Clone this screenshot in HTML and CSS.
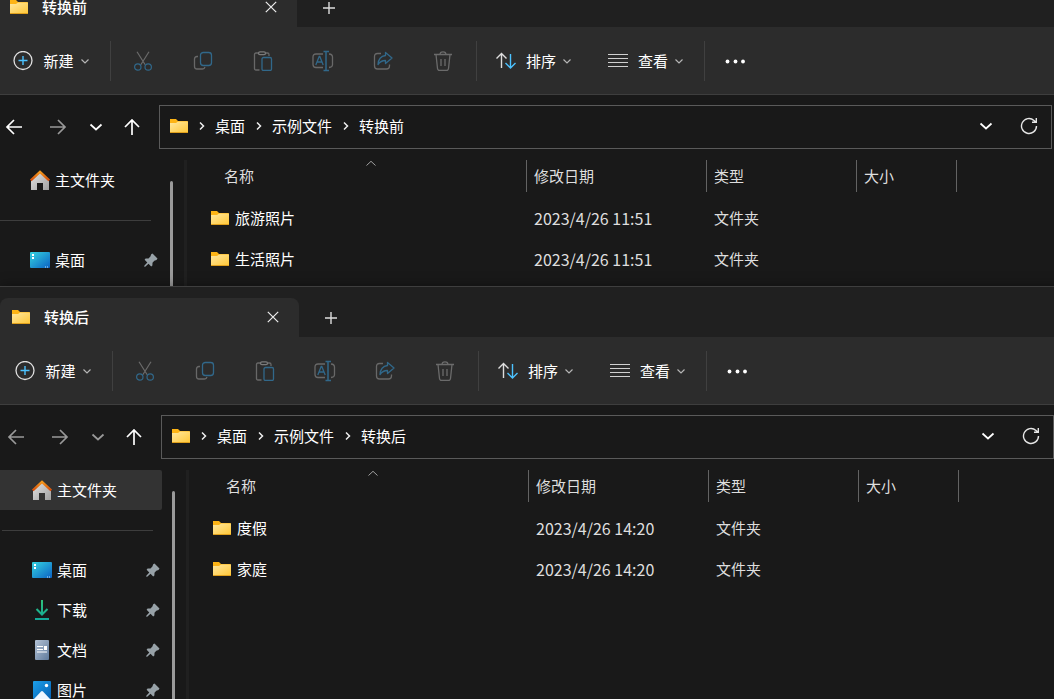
FILE: index.html
```html
<!DOCTYPE html>
<html lang="zh-CN">
<head>
<meta charset="utf-8">
<meta name="viewport" content="width=device-width, initial-scale=1">
<title>文件资源管理器</title>
<link rel="stylesheet" href="styles.css">
</head>
<body>
<svg class="sprite" aria-hidden="true">
  <defs>
    <linearGradient id="g-folder" x1="0" y1="0" x2="1" y2="1"><stop offset="0" stop-color="#ffe8a0"/><stop offset="1" stop-color="#ffc83a"/></linearGradient>
    <linearGradient id="g-roof" x1="0" y1="0" x2="0" y2="1"><stop offset="0" stop-color="#f59a1c"/><stop offset="1" stop-color="#d24a0a"/></linearGradient>
    <linearGradient id="g-wall" x1="0" y1="0" x2="1" y2="1"><stop offset="0" stop-color="#e4e4e4"/><stop offset="1" stop-color="#a0a0a0"/></linearGradient>
    <linearGradient id="g-desk" x1="0" y1="0" x2="1" y2="1"><stop offset="0" stop-color="#35d3e0"/><stop offset="1" stop-color="#0b62c4"/></linearGradient>
    <linearGradient id="g-down" x1="0" y1="0" x2="0" y2="20" gradientUnits="userSpaceOnUse"><stop offset="0" stop-color="#2fc27c"/><stop offset="1" stop-color="#12a89a"/></linearGradient>
    <linearGradient id="g-doc" x1="0" y1="0" x2="1" y2="1"><stop offset="0" stop-color="#b4c3d6"/><stop offset="1" stop-color="#5f7a9b"/></linearGradient>
    <linearGradient id="g-pic" x1="0" y1="0" x2="1" y2="1"><stop offset="0" stop-color="#1d9fe8"/><stop offset="1" stop-color="#0560b4"/></linearGradient>
  </defs>
  <symbol id="folder" viewBox="0 0 20 16"><path d="M1 1h6l2 2h9q1 0 1 1v10H1z" fill="#fdb415"/><path d="M1 5h6l2-1.500h10V14H1z" fill="url(#g-folder)"/><path d="M1 14.500h18" stroke="#e0a01c"/></symbol>
  <symbol id="close" viewBox="0 0 12 12"><path d="M.8.8l10.400 10.400M11.200.8L.8 11.200" stroke="#eee" stroke-width="1.200" fill="none"/></symbol>
  <symbol id="add" viewBox="0 0 14 14"><path d="M7 1v12M1 7h12" stroke="#ddd" stroke-width="1.400" fill="none"/></symbol>
  <symbol id="new" viewBox="0 0 20 20"><circle cx="10" cy="9.500" r="9" stroke="#e0e0e0" stroke-width="1.300" fill="none"/><path d="M10 5v9M5.500 9.500h9" stroke="#4cc2ff" stroke-width="1.400"/></symbol>
  <symbol id="chev" viewBox="0 0 10 10"><path d="M1.500 3.500L5 7l3.500-3.500" stroke="#b5b5b5" stroke-width="1.200" fill="none"/></symbol>
  <symbol id="cut" viewBox="0 0 20 20"><g fill="none" stroke-width="1.200"><path d="M4 .8l8.200 13M16 .8l-8.200 13" stroke="#6b6b6b"/><circle cx="4.800" cy="16" r="3.200" stroke="#31688a"/><circle cx="15.200" cy="16" r="3.200" stroke="#31688a"/></g></symbol>
  <symbol id="copy" viewBox="0 0 20 20"><g fill="none" stroke-width="1.300"><path d="M5 5.500H4Q1.500 5.500 1.500 8v7.500Q1.500 18 4 18h5.500q2 0 2.500-2" stroke="#686868"/><rect x="7.500" y="1.500" width="11" height="13" rx="2.800" stroke="#31688a"/></g></symbol>
  <symbol id="paste" viewBox="0 0 20 20"><g fill="none" stroke-width="1.300"><path d="M6.500 19H3q-1.500 0-1.500-1.500v-14Q1.500 2 3 2h2m8 0h1.500Q16 2 16 3.500V5" stroke="#686868"/><rect x="5.500" y=".8" width="7" height="2.800" rx="1.400" stroke="#7a7a7a"/><rect x="9" y="6.500" width="9.500" height="13" rx="1.500" stroke="#31688a"/></g></symbol>
  <symbol id="rename" viewBox="0 0 22 22"><g fill="none" stroke-width="1.300"><path d="M11 4H4Q1 4 1 7v7.500q0 3 3 3h7M17 4q3.500 .3 3.500 3v7.500q0 2.700-3.500 3" stroke="#686868"/><path d="M3.800 15l3.400-8.500h.6l3.400 8.500M5 12h5" stroke="#31688a"/><path d="M11.500 1.500h5.500M11.500 20.500h5.500M14 1.500v19" stroke="#31688a" stroke-width="1.500"/></g></symbol>
  <symbol id="share" viewBox="0 0 20 20"><g fill="none" stroke-width="1.300" stroke-linejoin="round"><path d="M8 2.500H4.500q-3 0-3 3V15q0 3 3 3h9q3 0 3-3v-1.500" stroke="#686868"/><path d="M12.500 1.500l6.500 5.500-6.500 5.500V9.500Q8 9.300 5 13.500 5.500 5.500 12.500 4.500z" stroke="#31688a"/></g></symbol>
  <symbol id="trash" viewBox="0 0 20 20"><path d="M1 3.500h18M3 3.500l1.500 14q.2 2 2 2h7q1.800 0 2-2l1.500-14M7 3.500q0-2.700 3-2.700t3 2.700M8 8v7M12 8v7" stroke="#6b6b6b" stroke-width="1.300" fill="none"/></symbol>
  <symbol id="sort" viewBox="0 0 20 20"><g fill="none" stroke-width="1.400"><path d="M5.500 17V2.500M.5 7.500l5-5 5 5" stroke="#ddd"/><path d="M14.500 3v14M9.500 12l5 5 5-5" stroke="#4cc2ff"/></g></symbol>
  <symbol id="view" viewBox="0 0 20 20"><path d="M0 3.500h20M0 7.500h20M0 11.500h20M0 15.500h20" stroke="#d0d0d0" stroke-width="1.200"/></symbol>
  <symbol id="more" viewBox="0 0 20 20"><g fill="#fff"><circle cx="2.500" cy="10.500" r="1.900"/><circle cx="10.500" cy="10.500" r="1.900"/><circle cx="18" cy="10.500" r="1.900"/></g></symbol>
  <symbol id="arrow" viewBox="0 0 18 18"><path d="M17 9H2M9 2L2 9l7 7" stroke="currentColor" stroke-width="1.700" fill="none"/></symbol>
  <symbol id="down" viewBox="0 0 14 14"><path d="M1.500 4.500L7 9.500l5.500-5" stroke="currentColor" stroke-width="1.700" fill="none"/></symbol>
  <symbol id="crumb" viewBox="0 0 10 10"><path d="M3 1.500L6.500 5 3 8.500" stroke="#eee" stroke-width="1.500" fill="none"/></symbol>
  <symbol id="refresh" viewBox="0 0 18 18"><path d="M16.500 9A7.500 7.500 0 1 1 14 3.400l2 1.800M16.300 1v4.300H12" stroke="#e6e6e6" stroke-width="1.400" fill="none"/></symbol>
  <symbol id="caret" viewBox="0 0 10 6"><path d="M.5 5.500L5 1.300 9.500 5.500" stroke="#a0a0a0" fill="none"/></symbol>
  <symbol id="home" viewBox="0 0 20 20"><path d="M1 10l9-8 9 8v10h-6v-7H7v7H1z" fill="url(#g-wall)"/><path d="M.8 10.500L10 1.800l9.200 8.700" fill="none" stroke="url(#g-roof)" stroke-width="2.400"/></symbol>
  <symbol id="desktop" viewBox="0 0 20 20"><rect y="2" width="20" height="16" rx="1" fill="url(#g-desk)"/><path d="M2 4h2v2H2zM2 7h2v2H2z" fill="#fff"/><path d="M15 17h1M17 17h1" stroke="#bde4ff"/></symbol>
  <symbol id="download" viewBox="0 0 20 20"><path d="M10 0v14M4.500 9L10 14.500 15.500 9M3 19h14" fill="none" stroke="url(#g-down)" stroke-width="2"/></symbol>
  <symbol id="document" viewBox="0 0 20 20"><rect x="3" width="14" height="20" rx="1" fill="url(#g-doc)"/><path d="M5 6.500h6M5 9.500h6M5 12h10" stroke="#fff"/><path d="M12 6h3v4h-3z" fill="#fff"/></symbol>
  <symbol id="picture" viewBox="0 0 20 20"><rect x="1" y="1" width="18" height="18" rx="1" fill="url(#g-pic)"/><circle cx="14.500" cy="5.500" r="1.700" fill="#fff"/><path d="M2 19l7-7.500q1-1 2 0l7 7.500z" fill="#eef6ff"/></symbol>
  <symbol id="pin" viewBox="0 0 14 14"><path d="M8.500.5l5 5-1 1.500-2.200.8-1.800 2-.1 2.700-1.200 1L4.500 10.800 1.200 13.700H.3v-.9l3-3.300L.6 6.800l1-1.200 2.900-.2L6.400 3.600 7.200 1.300z" fill="#98a2a8"/></symbol>
</svg>

<main class="desktop">
  <section class="window window-back" aria-label="转换前">
    <header class="tabs">
      <div class="tab">
        <svg class="i-folder"><use href="#folder"/></svg><span class="tab-title">转换前</span>
        <button class="tab-close" aria-label="关闭"><svg class="i12"><use href="#close"/></svg></button>
      </div>
      <button class="tab-add" aria-label="新标签页"><svg class="i14"><use href="#add"/></svg></button>
    </header>
    <div class="toolbar">
      <button class="command first"><svg class="i20"><use href="#new"/></svg><span>新建</span><svg class="i10"><use href="#chev"/></svg></button>
      <div class="tools">
        <button aria-label="剪切"><svg class="i20"><use href="#cut"/></svg></button>
        <button aria-label="复制"><svg class="i20"><use href="#copy"/></svg></button>
        <button aria-label="粘贴"><svg class="i20"><use href="#paste"/></svg></button>
        <button aria-label="重命名"><svg class="i22"><use href="#rename"/></svg></button>
        <button aria-label="共享"><svg class="i20"><use href="#share"/></svg></button>
        <button aria-label="删除"><svg class="i20"><use href="#trash"/></svg></button>
      </div>
      <div class="views">
        <button class="command"><svg class="i20"><use href="#sort"/></svg><span>排序</span><svg class="i10"><use href="#chev"/></svg></button>
        <button class="command"><svg class="i20"><use href="#view"/></svg><span>查看</span><svg class="i10"><use href="#chev"/></svg></button>
      </div>
      <button class="more" aria-label="更多"><svg class="i20"><use href="#more"/></svg></button>
    </div>
    <div class="location">
      <div class="history">
        <button aria-label="后退"><svg class="i18"><use href="#arrow"/></svg></button>
        <button class="dim" aria-label="前进"><svg class="i18 right"><use href="#arrow"/></svg></button>
        <button class="recent" aria-label="最近位置"><svg class="i14"><use href="#down"/></svg></button>
        <button class="up-button" aria-label="向上"><svg class="i18 up"><use href="#arrow"/></svg></button>
      </div>
      <nav class="address" aria-label="地址">
        <svg class="i-folder"><use href="#folder"/></svg>
        <svg class="crumb"><use href="#crumb"/></svg><a href="#">桌面</a>
        <svg class="crumb"><use href="#crumb"/></svg><a href="#">示例文件</a>
        <svg class="crumb"><use href="#crumb"/></svg><a href="#">转换前</a>
        <button class="history-list" aria-label="历史记录"><svg class="i14"><use href="#down"/></svg></button>
        <button aria-label="刷新"><svg class="i18"><use href="#refresh"/></svg></button>
      </nav>
    </div>
    <div class="body">
      <nav class="sidebar">
        <a class="place" href="#"><svg class="i20"><use href="#home"/></svg><span>主文件夹</span></a>
        <hr>
        <a class="place" href="#"><svg class="i20"><use href="#desktop"/></svg><span>桌面</span><svg class="pin"><use href="#pin"/></svg></a>
      </nav>
      <div class="scrollbar"></div>
      <div class="files">
        <svg class="sort-caret"><use href="#caret"/></svg>
        <table>
          <thead><tr><th class="c-name"><div>名称</div></th><th class="c-date"><div>修改日期</div></th><th class="c-type"><div>类型</div></th><th class="c-size"><div>大小</div></th><th></th></tr></thead>
          <tbody>
            <tr><td><div class="file"><svg class="i-folder"><use href="#folder"/></svg><span>旅游照片</span></div></td><td class="meta date">2023/4/26 11:51</td><td class="meta">文件夹</td><td></td><td></td></tr>
            <tr><td><div class="file"><svg class="i-folder"><use href="#folder"/></svg><span>生活照片</span></div></td><td class="meta date">2023/4/26 11:51</td><td class="meta">文件夹</td><td></td><td></td></tr>
          </tbody>
        </table>
      </div>
    </div>
  </section>

  <section class="window window-front" aria-label="转换后">
    <header class="tabs">
      <div class="tab">
        <svg class="i-folder"><use href="#folder"/></svg><span class="tab-title">转换后</span>
        <button class="tab-close" aria-label="关闭"><svg class="i12"><use href="#close"/></svg></button>
      </div>
      <button class="tab-add" aria-label="新标签页"><svg class="i14"><use href="#add"/></svg></button>
    </header>
    <div class="toolbar">
      <button class="command first"><svg class="i20"><use href="#new"/></svg><span>新建</span><svg class="i10"><use href="#chev"/></svg></button>
      <div class="tools">
        <button aria-label="剪切"><svg class="i20"><use href="#cut"/></svg></button>
        <button aria-label="复制"><svg class="i20"><use href="#copy"/></svg></button>
        <button aria-label="粘贴"><svg class="i20"><use href="#paste"/></svg></button>
        <button aria-label="重命名"><svg class="i22"><use href="#rename"/></svg></button>
        <button aria-label="共享"><svg class="i20"><use href="#share"/></svg></button>
        <button aria-label="删除"><svg class="i20"><use href="#trash"/></svg></button>
      </div>
      <div class="views">
        <button class="command"><svg class="i20"><use href="#sort"/></svg><span>排序</span><svg class="i10"><use href="#chev"/></svg></button>
        <button class="command"><svg class="i20"><use href="#view"/></svg><span>查看</span><svg class="i10"><use href="#chev"/></svg></button>
      </div>
      <button class="more" aria-label="更多"><svg class="i20"><use href="#more"/></svg></button>
    </div>
    <div class="location">
      <div class="history">
        <button class="dim" aria-label="后退"><svg class="i18"><use href="#arrow"/></svg></button>
        <button class="dim" aria-label="前进"><svg class="i18 right"><use href="#arrow"/></svg></button>
        <button class="recent dim" aria-label="最近位置"><svg class="i14"><use href="#down"/></svg></button>
        <button class="up-button" aria-label="向上"><svg class="i18 up"><use href="#arrow"/></svg></button>
      </div>
      <nav class="address" aria-label="地址">
        <svg class="i-folder"><use href="#folder"/></svg>
        <svg class="crumb"><use href="#crumb"/></svg><a href="#">桌面</a>
        <svg class="crumb"><use href="#crumb"/></svg><a href="#">示例文件</a>
        <svg class="crumb"><use href="#crumb"/></svg><a href="#">转换后</a>
        <button class="history-list" aria-label="历史记录"><svg class="i14"><use href="#down"/></svg></button>
        <button aria-label="刷新"><svg class="i18"><use href="#refresh"/></svg></button>
      </nav>
    </div>
    <div class="body">
      <nav class="sidebar">
        <a class="place current" href="#"><svg class="i20"><use href="#home"/></svg><span>主文件夹</span></a>
        <hr>
        <a class="place" href="#"><svg class="i20"><use href="#desktop"/></svg><span>桌面</span><svg class="pin"><use href="#pin"/></svg></a>
        <a class="place" href="#"><svg class="i20"><use href="#download"/></svg><span>下载</span><svg class="pin"><use href="#pin"/></svg></a>
        <a class="place" href="#"><svg class="i20"><use href="#document"/></svg><span>文档</span><svg class="pin"><use href="#pin"/></svg></a>
        <a class="place" href="#"><svg class="i20"><use href="#picture"/></svg><span>图片</span><svg class="pin"><use href="#pin"/></svg></a>
      </nav>
      <div class="scrollbar"></div>
      <div class="files">
        <svg class="sort-caret"><use href="#caret"/></svg>
        <table>
          <thead><tr><th class="c-name"><div>名称</div></th><th class="c-date"><div>修改日期</div></th><th class="c-type"><div>类型</div></th><th class="c-size"><div>大小</div></th><th></th></tr></thead>
          <tbody>
            <tr><td><div class="file"><svg class="i-folder"><use href="#folder"/></svg><span>度假</span></div></td><td class="meta date">2023/4/26 14:20</td><td class="meta">文件夹</td><td></td><td></td></tr>
            <tr><td><div class="file"><svg class="i-folder"><use href="#folder"/></svg><span>家庭</span></div></td><td class="meta date">2023/4/26 14:20</td><td class="meta">文件夹</td><td></td><td></td></tr>
          </tbody>
        </table>
      </div>
    </div>
  </section>
</main>
</body>
</html>
```
FILE: styles.css
```css
* { box-sizing: border-box; }
body {
  margin: 0;
  background: #191919;
  color: #fff;
  font: 15px/20px "Noto Sans CJK SC", sans-serif;
}
svg { display: block; flex: none; }
a { color: inherit; text-decoration: none; }
button {
  display: flex;
  align-items: center;
  justify-content: center;
  padding: 0;
  border: 0;
  background: none;
  color: inherit;
  font: inherit;
}
.sprite { position: absolute; width: 0; height: 0; }
.i10 { width: 10px; height: 10px; }
.i12 { width: 12px; height: 12px; }
.i14 { width: 14px; height: 14px; }
.i18 { width: 18px; height: 18px; }
.i20 { width: 20px; height: 20px; }
.i22 { width: 22px; height: 22px; }
.i-folder { width: 20px; height: 16px; }
.right { transform: rotate(180deg); }
.up { transform: rotate(90deg); }

/* Windows overlap freely and run past the desktop's edges */
.desktop { position: relative; height: 100vh; overflow: hidden; }
.window {
  position: absolute;
  right: -12px;
  display: flex;
  flex-direction: column;
  background: #191919;
  border-top: 1px solid #3e3e3e;
}
.window-back { left: -2px; right: -10px; top: -24px; }
.window-front { left: 0; top: 286px; bottom: 0; box-shadow: 0 0 12px rgba(0, 0, 0, .4); }

.tabs { display: flex; flex: none; height: 50px; padding-top: 11px; background: #202020; }
.tab {
  display: flex;
  align-items: center;
  width: 299px;
  padding: 0 16px 2px 11px;
  border-radius: 8px 8px 0 0;
  background: #2c2c2c;
}
.tab-title { flex: 1; margin-left: 13px; font-weight: 500; }
.tab-close { width: 20px; height: 20px; }
.tab-add { width: 64px; }

.toolbar {
  display: flex;
  flex: none;
  align-items: center;
  height: 68px;
  background: #2c2c2c;
  border-bottom: 1px solid #3e3e3e;
}
.command span { margin: 0 6px 0 10px; }
.first { width: 112px; padding-right: 5px; }
.tools, .views { display: flex; height: 40px; border-left: 1px solid #404040; }
.tools { width: 366px; padding-left: 2px; }
.tools button { width: 60px; }
.views { width: 229px; gap: 36px; padding-left: 19px; border-right: 1px solid #404040; }
.more { width: 60px; height: 40px; }

.location { display: flex; flex: none; align-items: center; padding: 10px 12px 11px 0; }
.history { display: flex; align-items: center; width: 161px; padding-left: 7px; }
.history button { height: 32px; }
.history button + button { margin-left: 26px; }
.history .recent { margin-left: 22px; }
.history .up-button { margin-left: 20px; }
.dim { color: #999; }
.address {
  display: flex;
  flex: 1;
  align-items: center;
  height: 44px;
  padding: 0 13px 2px 9px;
  border: 1px solid #5a5a5a;
}
.crumb { width: 10px; height: 10px; margin: 0 8px; }
.address > .crumb:not(:nth-child(2)) { margin: 0 8px 0 9px; }
.history-list { margin-left: auto; margin-right: 27px; }

.body { display: flex; flex: 1; min-height: 127px; }
.sidebar { width: 162px; }
.place { display: flex; align-items: center; height: 40px; padding: 0 2px 0 32px; border-radius: 0 2px 2px 0; }
.place span { flex: 1; margin-left: 5px; }
.current { background: #333; }
.pin { width: 14px; height: 14px; }
hr { height: 1px; margin: 20px 9px 19px 2px; border: 0; background: #3d3d3d; }
.scrollbar { width: 27px; padding: 21px 0 0 10px; border-right: 3px solid #202020; overflow: hidden; }
.scrollbar::before { content: ""; display: block; width: 3px; height: 100%; border-radius: 2px 2px 0 0; background: #9a9a9a; }

.files { position: relative; flex: 1; }
.sort-caret { position: absolute; left: 179px; top: 0; width: 10px; height: 6px; }
table { width: 100%; table-layout: fixed; border-collapse: collapse; }
th { height: 37px; padding: 0; vertical-align: top; font-weight: 400; text-align: left; color: #dedede; }
th div { height: 32px; padding-left: 7px; border-right: 1px solid #636363; line-height: 32px; }
.c-name { width: 340px; }
.c-name div { padding-left: 37px; }
.c-date { width: 180px; }
.c-type { width: 150px; }
.c-size { width: 100px; }
td { height: 41px; padding: 0; }
.file { display: flex; align-items: center; gap: 5px; padding-left: 23px; }
.meta { padding-left: 7px; color: #dedede; }
.date { font-size: 16px; }
```
